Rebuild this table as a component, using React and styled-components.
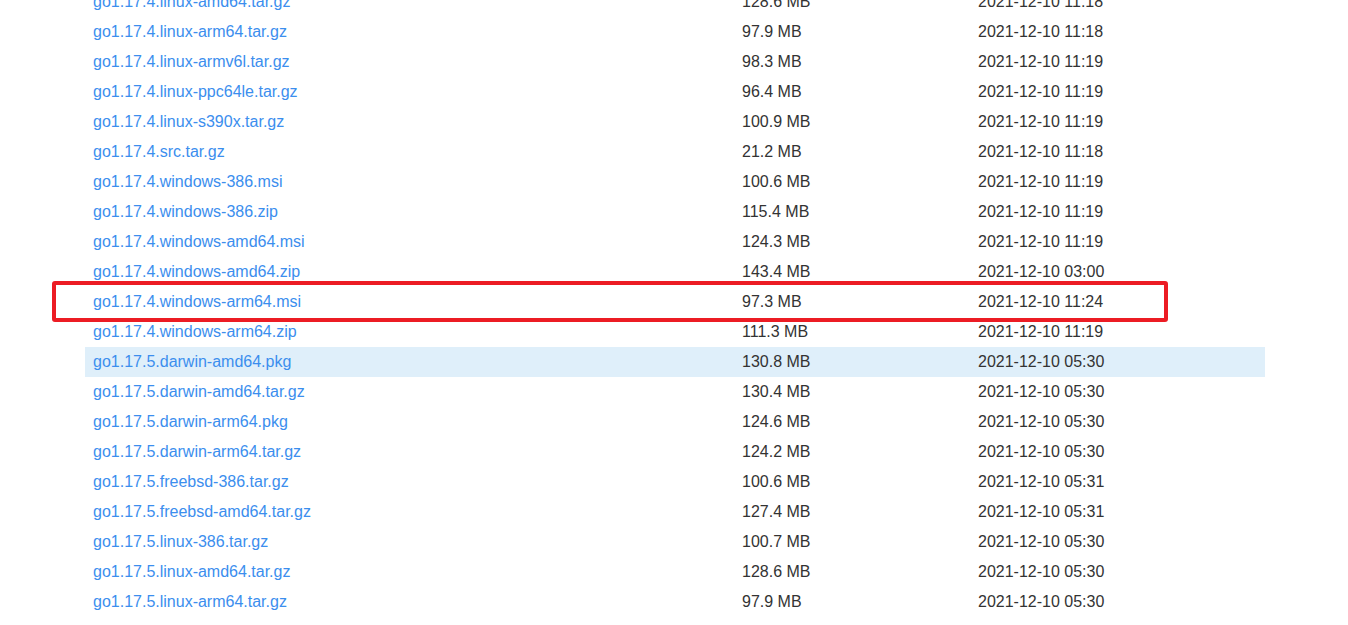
import React from 'react';
import styled, { createGlobalStyle } from 'styled-components';

const GlobalStyle = createGlobalStyle`
  html, body {
    margin: 0;
    padding: 0;
    background: #ffffff;
    overflow: hidden;
  }
  body {
    font-family: "Liberation Sans", Arial, sans-serif;
  }
`;

const Page = styled.div`
  padding-left: 85px;
  margin-top: -13px;
`;

const Table = styled.div`
  width: 1180px;
  display: flex;
  flex-direction: column;
`;

const Row = styled.div`
  position: relative;
  display: grid;
  grid-template-columns: 649px 236px 1fr;
  height: 30px;
  align-items: center;
  background: ${(p) => (p.$hover ? '#dfeffa' : 'transparent')};
  font-size: 16px;
`;

const Cell = styled.div`
  padding: 0 8px;
  white-space: nowrap;
  color: #333333;
`;

const FileLink = styled.a`
  color: #3b8eee;
  text-decoration: none;
  cursor: pointer;
`;

const Marker = styled.div`
  position: absolute;
  left: -33px;
  top: -6px;
  width: 1116px;
  height: 41px;
  box-sizing: border-box;
  border: 4px solid #ec1c24;
  border-radius: 3px;
  pointer-events: none;
`;

const files = [
  ['go1.17.4.linux-amd64.tar.gz', '128.6 MB', '2021-12-10 11:18'],
  ['go1.17.4.linux-arm64.tar.gz', '97.9 MB', '2021-12-10 11:18'],
  ['go1.17.4.linux-armv6l.tar.gz', '98.3 MB', '2021-12-10 11:19'],
  ['go1.17.4.linux-ppc64le.tar.gz', '96.4 MB', '2021-12-10 11:19'],
  ['go1.17.4.linux-s390x.tar.gz', '100.9 MB', '2021-12-10 11:19'],
  ['go1.17.4.src.tar.gz', '21.2 MB', '2021-12-10 11:18'],
  ['go1.17.4.windows-386.msi', '100.6 MB', '2021-12-10 11:19'],
  ['go1.17.4.windows-386.zip', '115.4 MB', '2021-12-10 11:19'],
  ['go1.17.4.windows-amd64.msi', '124.3 MB', '2021-12-10 11:19'],
  ['go1.17.4.windows-amd64.zip', '143.4 MB', '2021-12-10 03:00'],
  ['go1.17.4.windows-arm64.msi', '97.3 MB', '2021-12-10 11:24'],
  ['go1.17.4.windows-arm64.zip', '111.3 MB', '2021-12-10 11:19'],
  ['go1.17.5.darwin-amd64.pkg', '130.8 MB', '2021-12-10 05:30'],
  ['go1.17.5.darwin-amd64.tar.gz', '130.4 MB', '2021-12-10 05:30'],
  ['go1.17.5.darwin-arm64.pkg', '124.6 MB', '2021-12-10 05:30'],
  ['go1.17.5.darwin-arm64.tar.gz', '124.2 MB', '2021-12-10 05:30'],
  ['go1.17.5.freebsd-386.tar.gz', '100.6 MB', '2021-12-10 05:31'],
  ['go1.17.5.freebsd-amd64.tar.gz', '127.4 MB', '2021-12-10 05:31'],
  ['go1.17.5.linux-386.tar.gz', '100.7 MB', '2021-12-10 05:30'],
  ['go1.17.5.linux-amd64.tar.gz', '128.6 MB', '2021-12-10 05:30'],
  ['go1.17.5.linux-arm64.tar.gz', '97.9 MB', '2021-12-10 05:30'],
];

const App = () => {
  return (
    <>
      <GlobalStyle />
      <Page>
        <Table>
          {files.map(([name, size, date]) => (
            <Row key={name} $hover={name === 'go1.17.5.darwin-amd64.pkg'}>
              <Cell>
                <FileLink>{name}</FileLink>
              </Cell>
              <Cell>{size}</Cell>
              <Cell>{date}</Cell>
              {name === 'go1.17.4.windows-arm64.msi' && <Marker />}
            </Row>
          ))}
        </Table>
      </Page>
    </>
  );
};

export default App;
